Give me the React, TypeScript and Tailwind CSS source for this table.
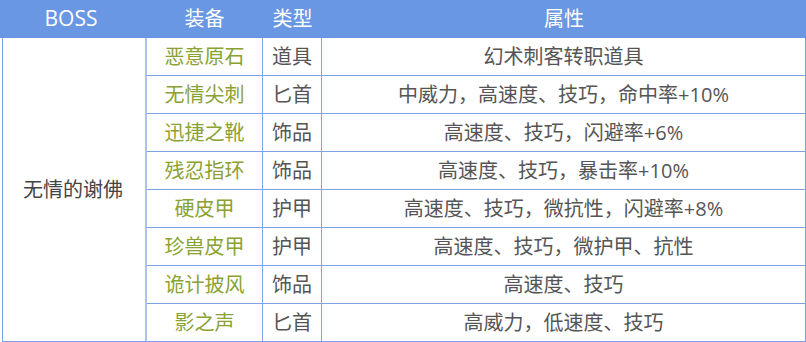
const rows = [
  { name: '恶意原石', type: '道具', attr: '幻术刺客转职道具' },
  { name: '无情尖刺', type: '匕首', attr: '中威力，高速度、技巧，命中率+10%' },
  { name: '迅捷之靴', type: '饰品', attr: '高速度、技巧，闪避率+6%' },
  { name: '残忍指环', type: '饰品', attr: '高速度、技巧，暴击率+10%' },
  { name: '硬皮甲', type: '护甲', attr: '高速度、技巧，微抗性，闪避率+8%' },
  { name: '珍兽皮甲', type: '护甲', attr: '高速度、技巧，微护甲、抗性' },
  { name: '诡计披风', type: '饰品', attr: '高速度、技巧' },
  { name: '影之声', type: '匕首', attr: '高威力，低速度、技巧' },
];

export default function App() {
  return (
    <div
      className="w-[806px] h-[342px] bg-white text-[20px] text-[#555555]"
      style={{ fontFamily: '"Open Sans", "Noto Sans CJK SC", sans-serif' }}
    >
      {/* Header */}
      <div className="grid grid-cols-[146px_117px_59px_1fr] h-[38px] bg-[#6a97e3] text-white items-center text-center">
        <div className="text-[21px] pr-1">BOSS</div>
        <div>装备</div>
        <div>类型</div>
        <div>属性</div>
      </div>

      {/* Body */}
      <div className="flex">
        <div className="ml-[2px] w-[145px] border-l border-b border-r-2 border-l-[#7ea2e6] border-b-[#7ea2e6] border-r-[#a9c3f0] flex items-center justify-center text-[#444444] pr-[2px]">
          无情的谢佛
        </div>
        <div className="flex-1 flex flex-col">
          {rows.map((r) => (
            <div
              key={r.name}
              className="grid grid-cols-[116px_59px_1fr] h-[38px] border-b border-[#7ea2e6] text-center items-stretch"
            >
              <div className="flex items-center justify-center border-r border-[#7ea2e6] text-[#8aa232]">
                {r.name}
              </div>
              <div className="flex items-center justify-center border-r border-[#7ea2e6]">
                {r.type}
              </div>
              <div className="flex items-center justify-center border-r border-[#7ea2e6]">
                {r.attr}
              </div>
            </div>
          ))}
        </div>
      </div>
    </div>
  );
}
